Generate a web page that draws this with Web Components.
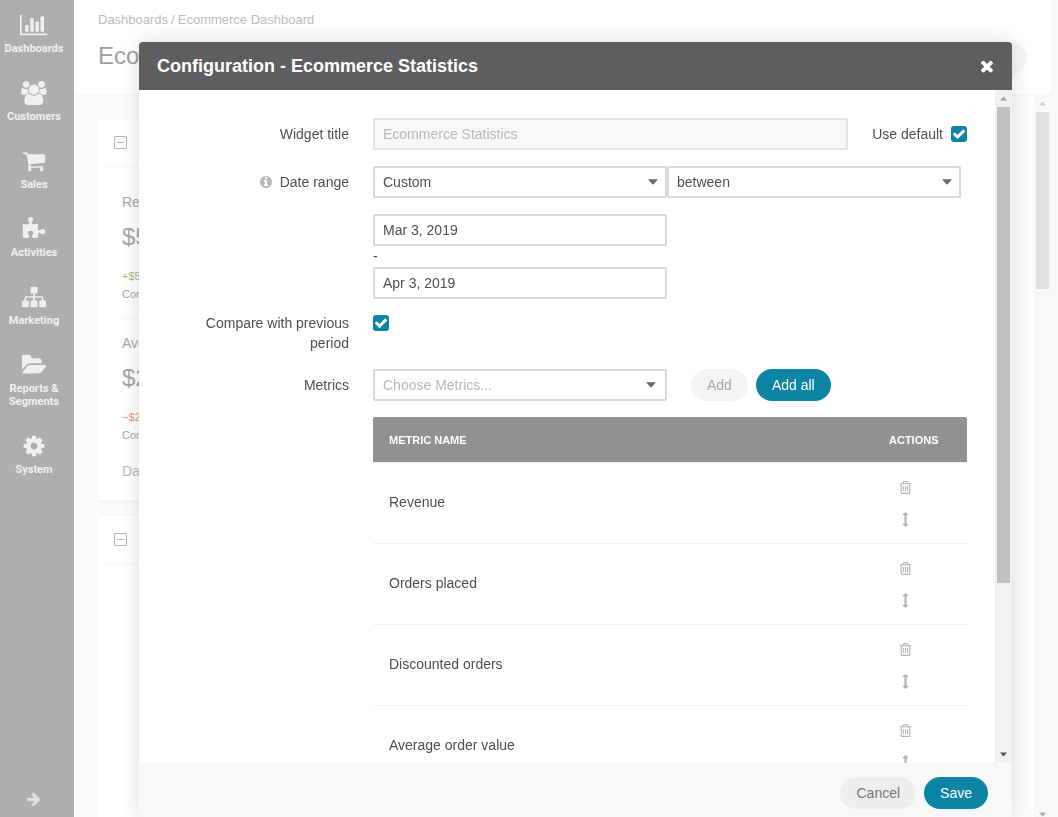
<!DOCTYPE html>
<html lang="en">
<head>
<meta charset="utf-8">
<title>Ecommerce Dashboard</title>
<style>
html, body { height: 100%; margin: 0; }
body { overflow: hidden; font: 14px/20px "Liberation Sans", Arial, sans-serif; color: #4f4f51; background: #fff; }
</style>
</head>
<body>
<app-shell>
  <side-nav slot="nav"></side-nav>
  <dashboard-page></dashboard-page>
</app-shell>
<modal-dialog heading="Configuration - Ecommerce Statistics">
  <config-form></config-form>
</modal-dialog>

<script>
const ICONS = {
  chart: [2048, "M640 896v512h-256v-512h256zm384-512v1024h-256v-1024h256zm1024 1152v128h-2048v-1536h128v1408h1920zm-640-896v768h-256v-768h256zm384-384v1152h-256v-1152h256z"],
  users: [1920, "M593 896q-162 5-265 128h-134q-82 0-138-40.5t-56-118.5q0-353 124-353 6 0 43.5 21t97.5 42.5 119 21.5q67 0 133-23-5 37-5 66 0 139 81 256zm1071 637q0 120-73 189.5t-194 69.5h-874q-121 0-194-69.5t-73-189.5q0-53 3.5-103.5t14-109 26.5-108.5 43-97.5 62-81 85.5-53.5 111.5-20q10 0 43 21.5t73 48 107 48 135 21.5 135-21.5 107-48 73-48 43-21.5q61 0 111.5 20t85.5 53.5 62 81 43 97.5 26.5 108.5 14 109 3.5 103.5zm-1024-1277q0 106-75 181t-181 75-181-75-75-181 75-181 181-75 181 75 75 181zm704 384q0 159-112.5 271.5t-271.5 112.5-271.5-112.5-112.5-271.5 112.5-271.5 271.5-112.5 271.5 112.5 112.5 271.5zm576 225q0 78-56 118.5t-138 40.5h-134q-103-123-265-128 81-117 81-256 0-29-5-66 66 23 133 23 59 0 119-21.5t97.5-42.5 43.5-21q124 0 124 353zm-128-609q0 106-75 181t-181 75-181-75-75-181 75-181 181-75 181 75 75 181z"],
  cart: [1792, "M704 1536q0 52-38 90t-90 38-90-38-38-90 38-90 90-38 90 38 38 90zm896 0q0 52-38 90t-90 38-90-38-38-90 38-90 90-38 90 38 38 90zm128-1088v512q0 24-16.5 42.5t-40.5 21.5l-1044 122q13 60 13 70 0 16-24 64h920q26 0 45 19t19 45-19 45-45 19h-1024q-26 0-45-19t-19-45q0-11 8-31.5t16-36 21.5-40 15.5-29.5l-177-823h-204q-26 0-45-19t-19-45 19-45 45-19h256q16 0 28.5 6.5t19.5 15.5 13 24.5 8 26 5.5 29.5 4.5 26h1201q26 0 45 19t19 45z"],
  puzzle: [1792, "M1728 1098q0 81-44.5 135t-123.5 54q-41 0-77.5-17.5t-59-38-56.5-38-71-17.5q-110 0-110 124 0 39 16 115t15 115v5q-22 0-33 1-34 3-97.5 11.5t-115.5 13.5-98 5q-61 0-103-26.5t-42-83.5q0-37 17.5-71t38-56.5 38-59 17.5-77.5q0-79-54-123.5t-135-44.5q-84 0-143 45.5t-59 127.5q0 43 15 83t33.5 64.5 33.5 53 15 50.5q0 45-46 89-37 35-117 35-95 0-245-24-9-2-27.5-4t-27.5-4l-13-2q-1 0-3-1-2 0-2-1v-1024q2 1 17.5 3.5t34 5 21.5 3.5q150 24 245 24 80 0 117-35 46-44 46-89 0-22-15-50.5t-33.5-53-33.5-64.5-15-83q0-82 59-127.5t144-45.5q80 0 134 44.5t54 123.5q0 41-17.5 77.5t-38 59-38 56.5-17.5 71q0 57 42 83.5t103 26.5q64 0 180-15t163-17v2q-1 2-3.5 17.5t-5 34-3.5 21.5q-24 150-24 245 0 80 35 117 44 46 89 46 22 0 50.5-15t53-33.5 64.5-33.5 83-15q82 0 127.5 59t45.5 143z"],
  sitemap: [1792, "M1792 1248v320q0 40-28 68t-68 28h-320q-40 0-68-28t-28-68v-320q0-40 28-68t68-28h96v-192h-512v192h96q40 0 68 28t28 68v320q0 40-28 68t-68 28h-320q-40 0-68-28t-28-68v-320q0-40 28-68t68-28h96v-192h-512v192h96q40 0 68 28t28 68v320q0 40-28 68t-68 28h-320q-40 0-68-28t-28-68v-320q0-40 28-68t68-28h96v-192q0-52 38-90t90-38h512v-192h-96q-40 0-68-28t-28-68v-320q0-40 28-68t68-28h320q40 0 68 28t28 68v320q0 40-28 68t-68 28h-96v192h512q52 0 90 38t38 90v192h96q40 0 68 28t28 68z"],
  folder: [1856, "M1815 952q0 31-31 66l-336 396q-43 51-120.5 86.5t-143.5 35.5h-1088q-34 0-60.5-13t-26.5-43q0-31 31-66l336-396q43-51 120.5-86.5t143.5-35.5h1088q34 0 60.5 13t26.5 43zm-343-344v160h-832q-94 0-197 47.5t-164 119.5l-337 396-5 6q0-4-.5-12.5t-.5-12.5v-960q0-92 66-158t158-66h320q92 0 158 66t66 158v32h544q92 0 158 66t66 158z"],
  cog: [1792, "M1152 896q0-106-75-181t-181-75-181 75-75 181 75 181 181 75 181-75 75-181zm512-109v222q0 12-8 23t-20 13l-185 28q-19 54-39 91 35 50 107 138 10 12 10 25t-9 23q-27 37-99 108t-94 71q-12 0-26-9l-138-108q-44 23-91 38-16 136-29 186-7 28-36 28h-222q-14 0-24.5-8.5t-11.5-21.5l-28-184q-49-16-90-37l-141 107q-10 9-25 9-14 0-25-11-126-114-165-168-7-10-7-23 0-12 8-23 15-21 51-66.5t54-70.5q-27-50-41-99l-183-27q-13-2-21-12.5t-8-23.5v-222q0-12 8-23t19-13l186-28q14-46 39-92-40-57-107-138-10-12-10-24 0-10 9-23 26-36 98.5-107.5t94.5-71.5q13 0 26 10l138 107q44-23 91-38 16-136 29-186 7-28 36-28h222q14 0 24.5 8.5t11.5 21.5l28 184q49 16 90 37l142-107q9-9 24-9 13 0 25 10 129 119 165 170 7 8 7 22 0 12-8 23-15 21-51 66.5t-54 70.5q26 50 41 98l183 28q13 2 21 12.5t8 23.5z"],
  arrow: [1792, "M1600 960q0 54-37 91l-651 651q-39 37-91 37-51 0-90-37l-75-75q-38-38-38-91t38-91l293-293h-704q-52 0-84.5-37.5t-32.5-90.5v-128q0-53 32.5-90.5t84.5-37.5h704l-293-294q-38-36-38-90t38-90l75-75q38-38 90-38 53 0 91 38l651 651q37 35 37 90z"],
  times: [1792, "M1490 1322q0 40-28 68l-136 136q-28 28-68 28t-68-28l-294-294-294 294q-28 28-68 28t-68-28l-136-136q-28-28-28-68t28-68l294-294-294-294q-28-28-28-68t28-68l136-136q28-28 68-28t68 28l294 294 294-294q28-28 68-28t68 28l136 136q28 28 28 68t-28 68l-294 294 294 294q28 28 28 68z"],
  info: [1792, "M1152 1376v-160q0-14-9-23t-23-9h-96v-512q0-14-9-23t-23-9h-320q-14 0-23 9t-9 23v160q0 14 9 23t23 9h96v320h-96q-14 0-23 9t-9 23v160q0 14 9 23t23 9h448q14 0 23-9t9-23zm-128-896v-160q0-14-9-23t-23-9h-192q-14 0-23 9t-9 23v160q0 14 9 23t23 9h192q14 0 23-9t9-23zm640 416q0 209-103 385.5t-279.5 279.5-385.5 103-385.5-103-279.5-279.5-103-385.5 103-385.5 279.5-279.5 385.5-103 385.5 103 279.5 279.5 103 385.5z"],
  trash: [1792, "M704 736v576q0 14-9 23t-23 9h-64q-14 0-23-9t-9-23v-576q0-14 9-23t23-9h64q14 0 23 9t9 23zm256 0v576q0 14-9 23t-23 9h-64q-14 0-23-9t-9-23v-576q0-14 9-23t23-9h64q14 0 23 9t9 23zm256 0v576q0 14-9 23t-23 9h-64q-14 0-23-9t-9-23v-576q0-14 9-23t23-9h64q14 0 23 9t9 23zm128 724v-948h-896v948q0 22 7 40.5t14.5 27 10.5 8.5h832q3 0 10.5-8.5t14.5-27 7-40.5zm-672-1076h448l-48-117q-7-9-17-11h-317q-10 2-17 11zm928 32v64q0 14-9 23t-23 9h-96v948q0 83-47 143.5t-113 60.5h-832q-66 0-113-58.5t-47-141.5v-952h-96q-14 0-23-9t-9-23v-64q0-14 9-23t23-9h309l70-167q15-37 54-63t79-26h320q40 0 79 26t54 63l70 167h309q14 0 23 9t9 23z"],
  move: [1792, "M1216 320q0 26-19 45t-45 19h-128v1024h128q26 0 45 19t19 45-19 45l-256 256q-19 19-45 19t-45-19l-256-256q-19-19-19-45t19-45 45-19h128v-1024h-128q-26 0-45-19t-19-45 19-45l256-256q19-19 45-19t45 19l256 256q19 19 19 45z"],
  check: [1792, "M1671 566q0 40-28 68l-724 724-136 136q-28 28-68 28t-68-28l-136-136-362-362q-28-28-28-68t28-68l136-136q28-28 68-28t68 28l294 295 656-657q28-28 68-28t68 28l136 136q28 28 28 68z"],
  caret: [1792, "M0 384h1792l-896 1024z"],
  minus: [1792, "M256 0h1280q256 0 256 256v1280q0 256-256 256h-1280q-256 0-256-256v-1280q0-256 256-256zm0 138q-118 0-118 118v1280q0 118 118 118h1280q118 0 118-118v-1280q0-118-118-118zm128 689h1024v138h-1024z"]
};

function define(name, render) {
  customElements.define(name, class extends HTMLElement {
    connectedCallback() {
      if (this.shadowRoot) return;
      const t = document.createElement("template");
      t.innerHTML = render(this);
      this.attachShadow({ mode: "open" }).append(t.content.cloneNode(true));
    }
  });
}

/* Icon whose height is --size; the width follows the glyph. */
define("ui-icon", el => {
  const [w, d] = ICONS[el.getAttribute("name")];
  return `<style>
    :host { display: block; flex: none; }
    svg { display: block; height: var(--size, 16px); margin: auto; fill: currentColor; }
  </style><svg viewBox="0 0 ${w} 1792" aria-hidden="true"><path d="${d}"/></svg>`;
});

define("scroll-rail", () => `<style>
    :host { display: flex; flex-direction: column; flex: none; width: 17px; box-sizing: border-box; align-items: center; background: var(--track, #f1f1f1); }
    ui-icon { --size: 7px; height: 7px; padding: 5px; }
    .up { transform: rotate(180deg); color: var(--up, #a3a3a3); }
    .down { margin-top: auto; color: var(--down, #505050); }
    .thumb { width: 13px; height: var(--thumb-size, 73%); background: var(--thumb, #c1c1c1); }
  </style><ui-icon class="up" name="caret"></ui-icon><div class="thumb"></div><ui-icon class="down" name="caret"></ui-icon>`);

define("pill-button", el => `<style>
    :host { display: block; flex: none; }
    button { display: block; min-width: 32px; height: 32px; padding: 0 16px; border: 0; border-radius: 16px; font: inherit; background: #eee; color: #77777a; }
    :host([kind=primary]) button { background: #0c84a3; color: #fff; }
    button:disabled { background: #f4f4f4; color: #a8a8a9; }
  </style><button type="button" ${el.hasAttribute("off") ? "disabled" : ""}><slot></slot></button>`);

define("app-shell", () => `<style>
    :host { display: flex; height: 100vh; }
    main { flex: 1; min-width: 0; display: flex; }
    ::slotted(dashboard-page) { flex: 1; min-width: 0; }
  </style><slot name="nav"></slot><main><slot></slot></main>`);

define("side-nav", () => {
  const items = [["chart", "Dashboards"], ["users", "Customers"], ["cart", "Sales"], ["puzzle", "Activities"],
    ["sitemap", "Marketing"], ["folder", "Reports &amp; Segments"], ["cog", "System"]];
  return `<style>
    :host { display: block; flex: none; width: 74px; background: #aeaeae; color: #f0f0f0; }
    nav { display: flex; flex-direction: column; width: 68px; height: 100%; }
    a { display: block; padding: 13px 2px; color: inherit; text-decoration: none; text-align: center; font-family: Roboto, "Liberation Sans", sans-serif; font-weight: bold; font-size: 11px; line-height: 13px; }
    a ui-icon { --size: 24px; margin-bottom: 5px; }
    button { margin-top: auto; padding: 0 0 10px; border: 0; background: none; color: #e0e0e0; }
    button ui-icon { --size: 16px; }
  </style><nav>${items.map(([i, t]) => `<a href="#"><ui-icon name="${i}"></ui-icon>${t}</a>`).join("")}
  <button type="button" aria-label="Expand menu"><ui-icon name="arrow"></ui-icon></button></nav>`;
});

define("widget-card", () => `<style>
    :host { display: block; background: #fff; box-shadow: 0 1px 6px rgba(0,0,0,.04); }
    header { height: 48px; box-sizing: border-box; display: flex; align-items: center; padding-left: 16px; border-bottom: 1px solid #f8f8f8; color: #b4b4b4; }
    ui-icon { --size: 13px; }
    .body { padding: 25px 24px 0; }
  </style><header><ui-icon name="minus"></ui-icon></header><div class="body"><slot></slot></div>`);

define("stat-block", el => `<style>
    :host { display: block; height: 140px; color: #a8a8a9; }
    p { margin: 0; }
    .value { font-size: 24px; line-height: 30px; margin-top: 10px; }
    .delta { font-size: 11px; line-height: 18px; margin-top: 15px; color: ${el.getAttribute("tone")}; }
    .note { font-size: 11px; line-height: 18px; }
  </style><p>${el.getAttribute("label")}</p><p class="value">${el.getAttribute("value")}</p>
  <p class="delta">${el.getAttribute("delta")}</p><p class="note">Com</p>`);

define("dashboard-page", () => `<style>
    :host { display: flex; min-width: 0; height: 100vh; overflow: hidden; }
    .col { flex: 1; min-width: 0; display: flex; flex-direction: column; }
    .gutter { flex: none; width: 7px; background: #f8f8f8; }
    .top { flex: none; height: 95px; box-sizing: border-box; padding: 10px 24px 0; border-bottom: 1px solid #f6f6f6; background: #fff; }
    nav { display: flex; gap: 3px; font-size: 13px; color: #bcbcbc; }
    a { color: inherit; text-decoration: none; }
    .title { display: flex; justify-content: space-between; margin-top: 12px; }
    h1 { margin: 0; font-weight: normal; font-size: 24px; line-height: 28px; color: #9f9fa0; }
    pill-button { opacity: .5; }
    .scroll { flex: 1; min-height: 0; display: flex; background: #fcfcfc; }
    .cards { flex: 1; min-width: 0; display: flex; flex-direction: column; gap: 16px; padding: 24px 24px 0; overflow: hidden; }
    widget-card { flex: none; }
    hr { margin: 0; border: 0; border-top: 1px solid #f6f6f6; }
    .first { height: 381px; }
    stat-block { height: 126px; }
    hr + stat-block { padding-top: 14px; height: 128px; }
    .foot { margin: 0; color: #bcbcbc; }
    .last { flex: 1; }
    scroll-rail { --track: #f8f8f8; --thumb: #e0e0e0; --thumb-size: 177px; --up: #d1d1d1; --down: #a8a8a8; margin-bottom: -6px; }
  </style>
  <div class="col">
    <div class="top">
      <nav aria-label="Breadcrumb"><a href="#">Dashboards</a><span>/</span><a href="#">Ecommerce Dashboard</a></nav>
      <div class="title"><h1>Eco</h1><pill-button></pill-button></div>
    </div>
    <div class="scroll">
      <div class="cards">
        <widget-card class="first">
          <stat-block label="Rev" value="$5" delta="+$5" tone="#9fc28e"></stat-block>
          <hr>
          <stat-block label="Ave" value="$2" delta="−$2" tone="#e3958c"></stat-block>
          <p class="foot">Da</p>
        </widget-card>
        <widget-card class="last"></widget-card>
      </div>
      <scroll-rail></scroll-rail>
    </div>
  </div>
  <div class="gutter"></div>`);

define("modal-dialog", el => `<style>
    :host { position: fixed; inset: 42px 46px 0 139px; display: flex; flex-direction: column; background: #fff; border-radius: 4px 4px 0 0; box-shadow: 0 0 20px rgba(0,0,0,.14); }
    header { flex: none; display: flex; align-items: center; justify-content: space-between; height: 48px; padding: 0 16px 0 18px; border-radius: 4px 4px 0 0; background: #5e5e60; color: #fff; }
    h2 { margin: 0; font-size: 18px; line-height: 24px; }
    .close { padding: 0; border: 0; background: none; color: #fff; }
    .close ui-icon { --size: 18px; }
    .body { flex: 1; min-height: 0; display: flex; }
    .content { flex: 1; min-width: 0; overflow: hidden; }
    scroll-rail { --thumb-size: 476px; }
    footer { flex: none; display: flex; justify-content: flex-end; gap: 8px; padding: 14px 24px 8px; background: #f8f8f8; }
  </style>
  <header><h2>${el.getAttribute("heading")}</h2><button class="close" type="button" aria-label="Close"><ui-icon name="times"></ui-icon></button></header>
  <div class="body"><div class="content"><slot></slot></div><scroll-rail></scroll-rail></div>
  <footer><pill-button>Cancel</pill-button><pill-button kind="primary">Save</pill-button></footer>`);

define("config-form", () => `<style>
    :host { display: block; padding: 28px 28px 0 50px; }
    form { display: flex; flex-direction: column; gap: 16px; }
    .row { display: grid; grid-template-columns: 160px minmax(0, 1fr); column-gap: 24px; }
    .label { display: flex; justify-content: flex-end; gap: 7px; padding-top: 6px; text-align: right; }
    .label ui-icon { --size: 14px; padding: 3px 0; color: #b8b8b8; }
    .compare { margin-top: -2px; }
    .compare .label { padding-top: 0; }
    .compare .tick { margin-top: 2px; }
    .line { display: flex; align-items: center; }
    .line.wide { gap: 24px; }
    .dates { margin-top: 16px; }
    .dash { height: 21px; line-height: 21px; }
    input:not([type=checkbox]), select { display: block; box-sizing: border-box; width: 100%; height: 32px; margin: 0; padding: 0 8px; border: 2px solid #d9d9d9; border-radius: 2px; background: #fff; font: inherit; color: #4f4f51; appearance: none; }
    input:not([type=checkbox]):disabled { background: #f8f8f8; border-color: #e3e3e3; color: #b8b8b8; }
    select.empty { color: #b8b8b8; }
    .date { max-width: 294px; }
    .select { display: grid; flex: 1 1 0; min-width: 0; max-width: 294px; align-items: center; }
    .select > * { grid-area: 1 / 1; }
    .select ui-icon { --size: 10px; justify-self: end; margin-right: 9px; pointer-events: none; color: #68686a; }
    .select .empty + ui-icon { margin-right: 11px; }
    .grow { flex: 1; min-width: 0; }
    .default { display: flex; align-items: center; gap: 8px; }
    .tick { display: grid; width: 16px; height: 16px; place-items: center; }
    .tick > * { grid-area: 1 / 1; }
    .tick input { appearance: none; width: 16px; height: 16px; margin: 0; border-radius: 3px; background: #0c84a3; }
    .tick ui-icon { --size: 14px; color: #fff; pointer-events: none; }
    .actions { display: flex; gap: 8px; }
  </style>
  <form>
    <div class="row">
      <label class="label" for="title">Widget title</label>
      <div class="line wide">
        <div class="grow"><input id="title" type="text" value="Ecommerce Statistics" disabled></div>
        <div class="default"><label for="default">Use default</label><span class="tick"><input id="default" type="checkbox" checked><ui-icon name="check"></ui-icon></span></div>
      </div>
    </div>
    <div class="row">
      <label class="label" for="range"><ui-icon name="info"></ui-icon>Date range</label>
      <div>
        <div class="line">
          <span class="select"><select id="range"><option>Custom</option></select><ui-icon name="caret"></ui-icon></span>
          <span class="select"><select aria-label="Range type"><option>between</option></select><ui-icon name="caret"></ui-icon></span>
        </div>
        <div class="dates">
          <input class="date" type="text" value="Mar 3, 2019" aria-label="Start date">
          <div class="dash">-</div>
          <input class="date" type="text" value="Apr 3, 2019" aria-label="End date">
        </div>
      </div>
    </div>
    <div class="row compare">
      <label class="label" for="compare">Compare with previous period</label>
      <span class="tick"><input id="compare" type="checkbox" checked><ui-icon name="check"></ui-icon></span>
    </div>
    <div class="row">
      <label class="label" for="metrics">Metrics</label>
      <div>
        <div class="line wide">
          <span class="select"><select id="metrics" class="empty"><option>Choose Metrics...</option></select><ui-icon name="caret"></ui-icon></span>
          <div class="actions"><pill-button off>Add</pill-button><pill-button kind="primary">Add all</pill-button></div>
        </div>
        <metric-table></metric-table>
      </div>
    </div>
  </form>`);

define("metric-table", () => `<style>
    :host { display: block; margin-top: 16px; }
    table { width: 100%; border-collapse: separate; border-spacing: 0; table-layout: fixed; }
    th, td { box-sizing: border-box; padding: 0 16px; text-align: left; border-bottom: 1px solid #f2f2f2; }
    th { height: 46px; background: #919193; background-clip: padding-box; color: #fff; font-size: 11px; line-height: 16px; text-transform: uppercase; }
    th:first-child { border-top-left-radius: 2px; }
    th:last-child { width: 94px; border-top-right-radius: 2px; }
    td { height: 81px; padding-bottom: 2px; }
    td:last-child { padding: 8px 16px; }
    button { display: grid; place-items: center; width: 32px; height: 32px; padding: 0; border: 0; background: none; color: #b4b4b4; }
    ui-icon { --size: 15px; }
  </style>
  <table><thead><tr><th scope="col">Metric name</th><th scope="col">Actions</th></tr></thead><tbody>
  ${["Revenue", "Orders placed", "Discounted orders", "Average order value"].map(m => `<tr><td>${m}</td><td>
    <button type="button" aria-label="Delete ${m}"><ui-icon name="trash"></ui-icon></button><button type="button" aria-label="Move ${m}"><ui-icon name="move"></ui-icon></button></td></tr>`).join("")}
  </tbody></table>`);
</script>
</body>
</html>
